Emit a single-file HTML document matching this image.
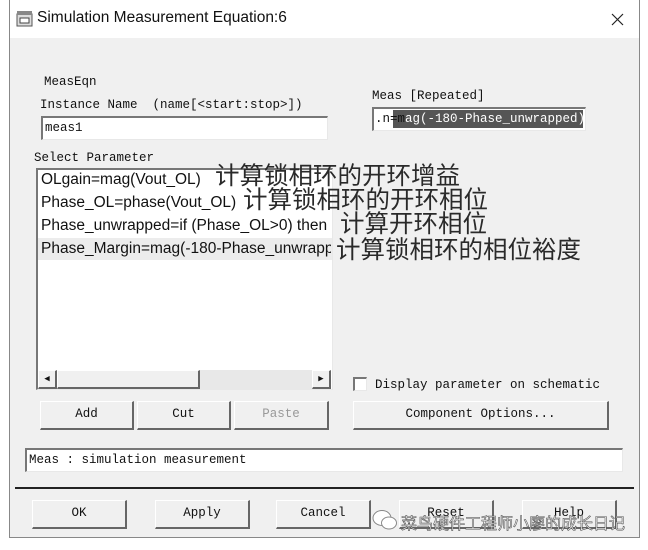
<!DOCTYPE html>
<html><head><meta charset="utf-8"><style>
*{margin:0;padding:0;box-sizing:border-box}
body{width:648px;height:550px;background:#fff;position:relative;overflow:hidden;font-family:"Liberation Mono",monospace}
.a{position:absolute}
.dlg{left:9px;top:0;width:631px;height:538px;background:#f0f0f0;border:1px solid #888;border-top:none}
.title{left:10px;top:0;width:629px;height:38px;background:#fff}
.m{font-family:"Liberation Mono",monospace;font-size:12.5px;color:#111;white-space:pre}
.inp{background:#fff;border-top:2px solid #777;border-left:2px solid #777;border-right:1px solid #e8e8e8;border-bottom:1px solid #e8e8e8}
.btn{background:#f0f0f0;border-top:1px solid #fff;border-left:1px solid #fff;border-right:2px solid #666;border-bottom:2px solid #666;font-family:"Liberation Mono",monospace;font-size:12.5px;text-align:center;line-height:25px;color:#111}
.li{font-family:"Liberation Sans",sans-serif;font-size:15.5px;color:#111;left:41px;white-space:nowrap;width:290px;overflow:hidden}
.cn{font-family:"Liberation Sans","Noto Sans CJK SC",sans-serif;font-size:24.5px;color:#2a2a2a;white-space:nowrap;line-height:26px}
</style></head><body>
<div class="a dlg"></div>
<div class="a title"></div>
<svg class="a" style="left:16px;top:11px" width="18" height="16"><rect x="1" y="3" width="15" height="12" fill="#ddd" stroke="#555"/><rect x="1" y="0" width="15" height="4" fill="#888"/><rect x="4" y="7" width="9" height="5" fill="#fff" stroke="#444"/></svg>
<div class="a" style="left:37px;top:9px;font-family:'Liberation Sans',sans-serif;font-size:15.5px;color:#111">Simulation Measurement Equation:6</div>
<svg class="a" style="left:611px;top:13px" width="13" height="13"><path d="M1 1L12 12M12 1L1 12" stroke="#222" stroke-width="1.2"/></svg>

<div class="a m" style="left:44px;top:75px">MeasEqn</div>
<div class="a m" style="left:40px;top:98px">Instance Name  (name[&lt;start:stop&gt;])</div>
<div class="a inp" style="left:41px;top:116px;width:287px;height:24px"></div>
<div class="a m" style="left:45px;top:121px">meas1</div>
<div class="a m" style="left:372px;top:89px">Meas [Repeated]</div>
<div class="a inp" style="left:372px;top:107px;width:214px;height:24px"></div>
<div class="a" style="left:393px;top:110px;width:190px;height:18px;background:#555"></div>
<div class="a m" style="left:375px;top:112px">.n=m<span style="color:#fff">ag(-180-Phase_unwrapped)</span></div>

<div class="a m" style="left:34px;top:151px">Select Parameter</div>
<div class="a inp" style="left:36px;top:168px;width:297px;height:222px"></div>
<div class="a" style="left:38px;top:238px;width:294px;height:22px;background:#ececec"></div>
<div class="a li" style="top:171px">OLgain=mag(Vout_OL)</div>
<div class="a li" style="top:194px">Phase_OL=phase(Vout_OL)</div>
<div class="a li" style="top:217px">Phase_unwrapped=if (Phase_OL&gt;0) then</div>
<div class="a li" style="top:240px">Phase_Margin=mag(-180-Phase_unwrapped)</div>
<div class="a" style="left:38px;top:370px;width:293px;height:19px;background:#e8e8e8"></div>
<div class="a btn" style="left:38px;top:370px;width:19px;height:19px;line-height:17px;font-size:9px">◀</div>
<div class="a btn" style="left:57px;top:370px;width:143px;height:19px"></div>
<div class="a btn" style="left:312px;top:370px;width:19px;height:19px;line-height:17px;font-size:9px">▶</div>

<div class="a cn" style="left:215px;top:164px">计算锁相环的开环增益</div>
<div class="a cn" style="left:243px;top:188px">计算锁相环的开环相位</div>
<div class="a cn" style="left:340px;top:212px">计算开环相位</div>
<div class="a cn" style="left:336px;top:238px">计算锁相环的相位裕度</div>

<div class="a inp" style="left:353px;top:377px;width:14px;height:14px"></div>
<div class="a m" style="left:375px;top:378px">Display parameter on schematic</div>
<div class="a btn" style="left:40px;top:401px;width:94px;height:29px">Add</div>
<div class="a btn" style="left:137px;top:401px;width:94px;height:29px">Cut</div>
<div class="a btn" style="left:234px;top:401px;width:95px;height:29px;color:#999">Paste</div>
<div class="a btn" style="left:353px;top:401px;width:256px;height:29px">Component Options...</div>
<div class="a inp" style="left:25px;top:448px;width:598px;height:24px"></div>
<div class="a m" style="left:29px;top:453px">Meas : simulation measurement</div>
<div class="a" style="left:15px;top:487px;width:619px;height:2px;background:#222"></div>
<div class="a btn" style="left:32px;top:500px;width:95px;height:29px">OK</div>
<div class="a btn" style="left:155px;top:500px;width:95px;height:29px">Apply</div>
<div class="a btn" style="left:276px;top:500px;width:95px;height:29px">Cancel</div>
<div class="a btn" style="left:399px;top:500px;width:95px;height:29px">Reset</div>
<div class="a btn" style="left:522px;top:500px;width:95px;height:29px">Help</div>
<svg class="a" style="left:372px;top:508px" width="26" height="24"><ellipse cx="10" cy="10" rx="9" ry="7.5" fill="#fff" stroke="#888"/><ellipse cx="17" cy="15" rx="7.5" ry="6" fill="#fff" stroke="#888"/></svg>
<div class="a" style="left:401px;top:510px;font-family:'Liberation Sans','Noto Sans CJK SC',sans-serif;font-size:16px;color:#fff;-webkit-text-stroke:0.6px #555;white-space:nowrap">菜鸟硬件工程师小廖的成长日记</div>
</body></html>
